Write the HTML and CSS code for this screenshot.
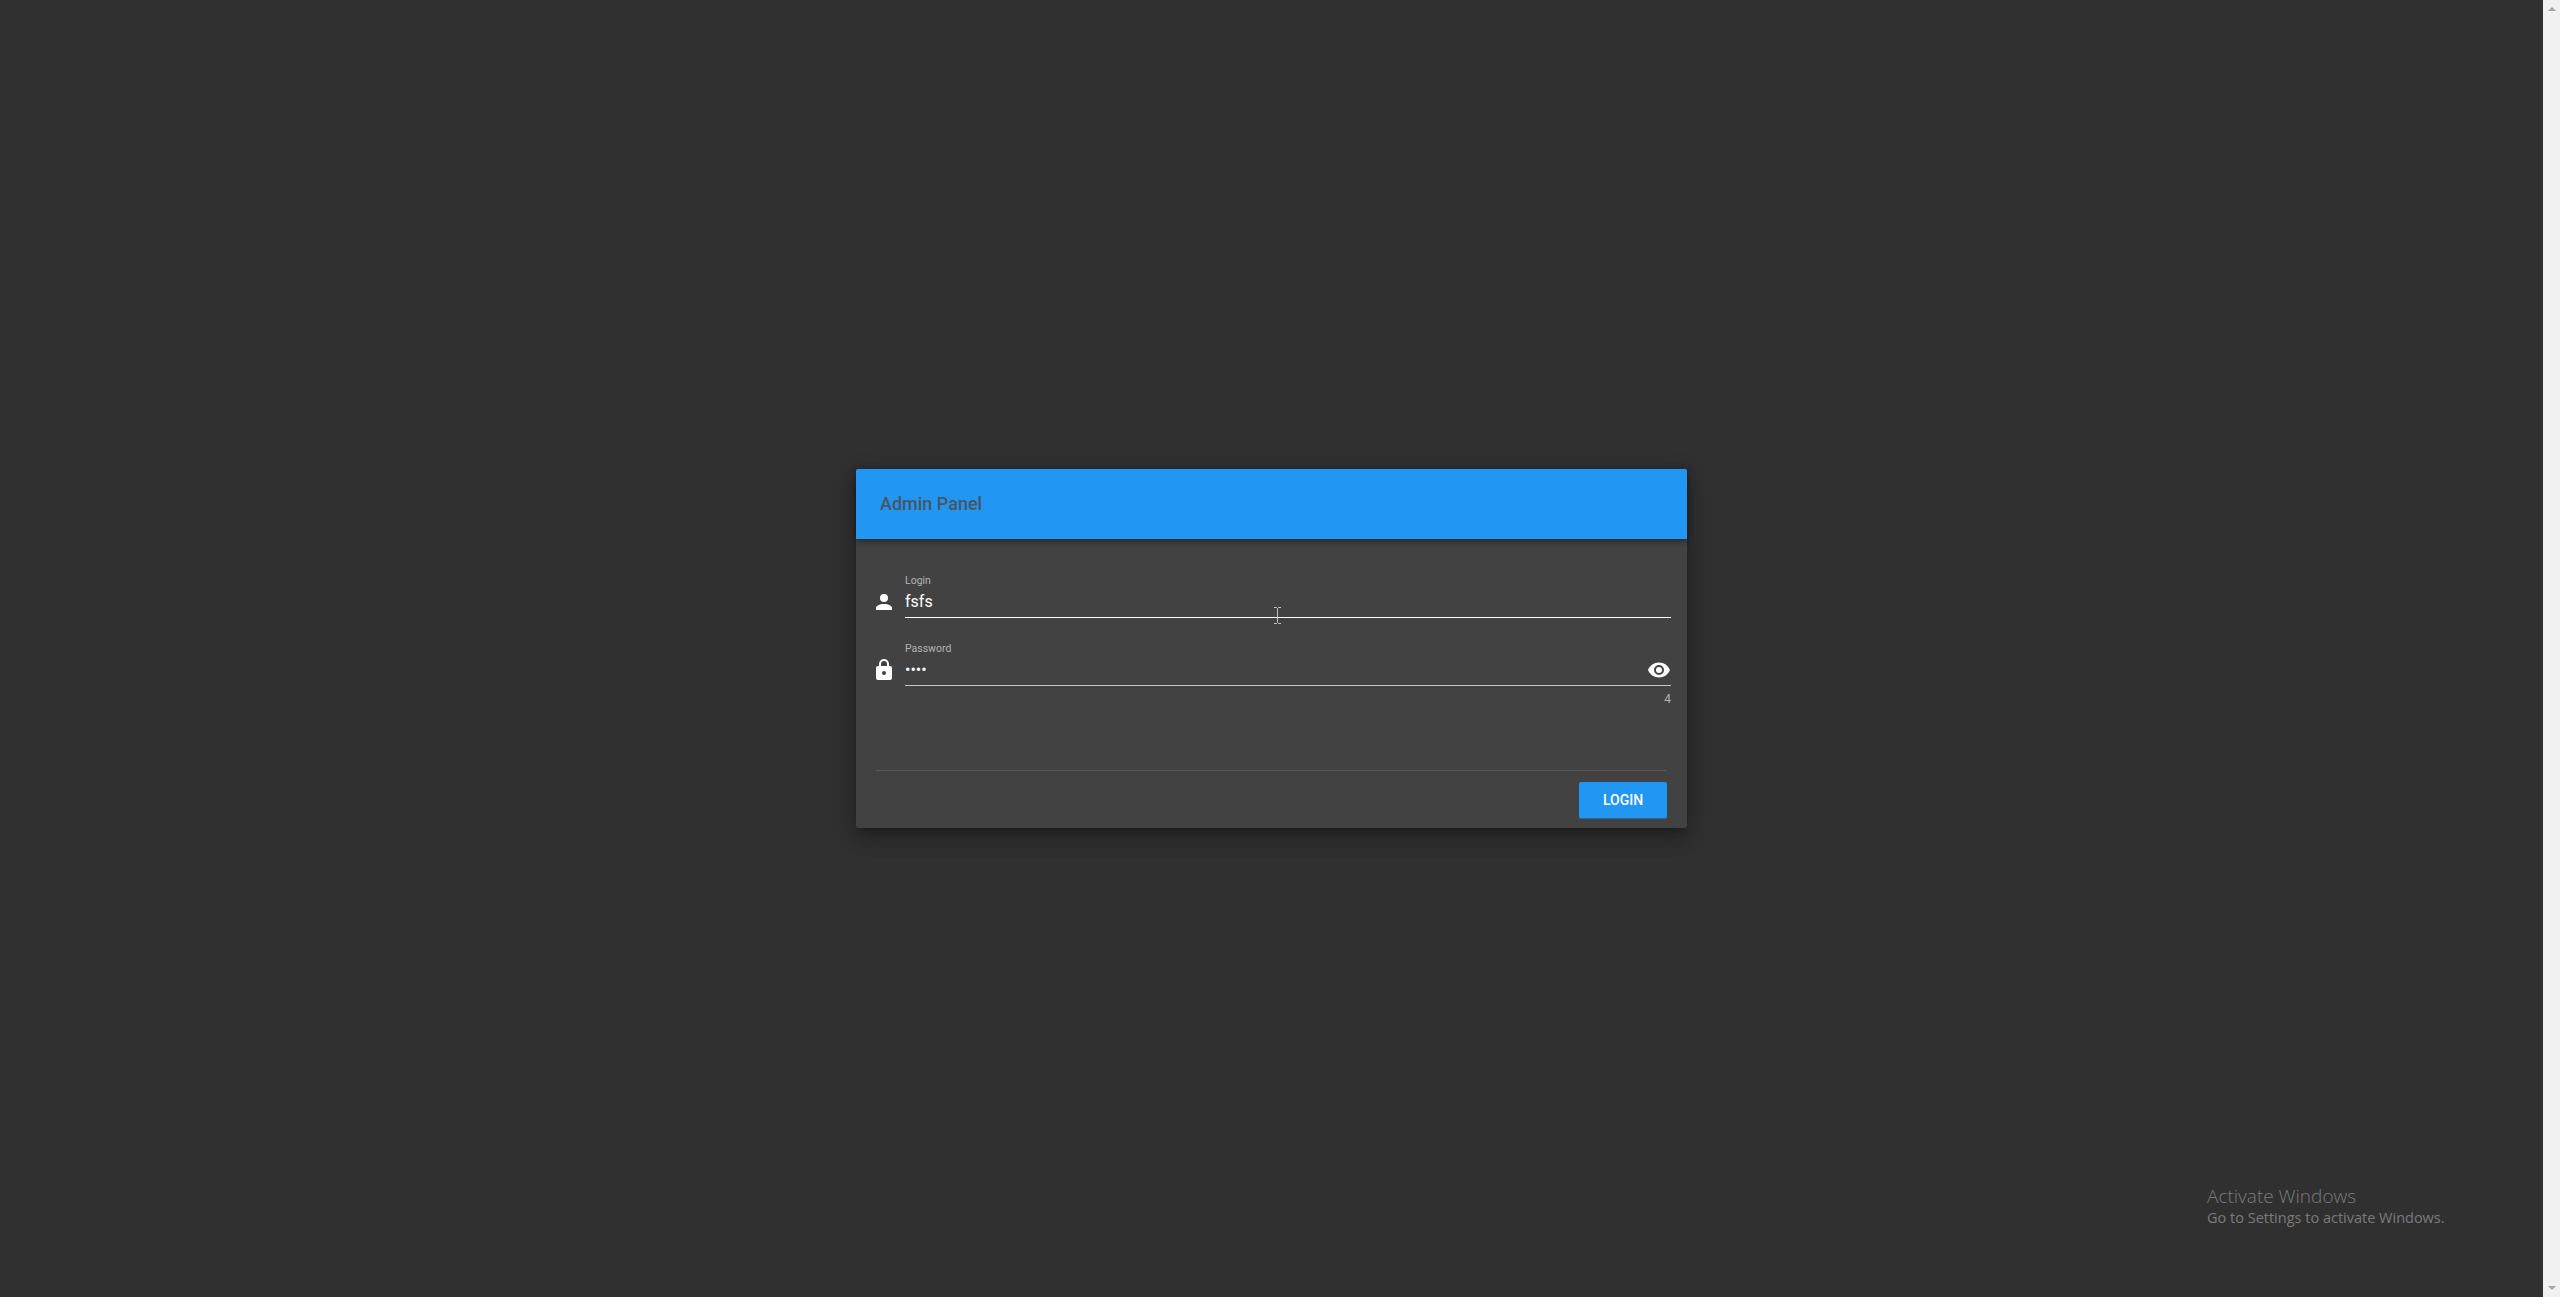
FILE: index.html
```html
<!DOCTYPE html>
<html lang="en">
<head>
  <meta charset="UTF-8">
  <title>Admin Panel</title>
  <link rel="stylesheet" href="styles.css">
</head>
<body>
  <main id="page">
    <form id="login-card">
      <header id="card-header">Admin Panel</header>
      <div id="card-body">
        <div class="field field-hover">
          <svg class="icon" viewBox="0 0 24 24"><path d="M12 4a4 4 0 0 1 4 4 4 4 0 0 1-4 4 4 4 0 0 1-4-4 4 4 0 0 1 4-4m0 10c4.42 0 8 1.79 8 4v2H4v-2c0-2.21 3.58-4 8-4z"/></svg>
          <div class="field-main">
            <label for="login">Login</label>
            <div class="field-input">
              <input type="text" id="login" value="fsfs">
            </div>
          </div>
        </div>
        <div class="field">
          <svg class="icon" viewBox="0 0 24 24"><path d="M12,17A2,2 0 0,0 14,15C14,13.89 13.1,13 12,13A2,2 0 0,0 10,15A2,2 0 0,0 12,17M18,8A2,2 0 0,1 20,10V20A2,2 0 0,1 18,22H6A2,2 0 0,1 4,20V10C4,8.89 4.9,8 6,8H7V6A5,5 0 0,1 12,1A5,5 0 0,1 17,6V8H18M12,3A3,3 0 0,0 9,6V8H15V6A3,3 0 0,0 12,3Z"/></svg>
          <div class="field-main">
            <label for="password">Password</label>
            <div class="field-input">
              <input type="password" id="password" value="fsfs">
              <svg class="icon eye" viewBox="0 0 24 24"><path d="M12,9A3,3 0 0,0 9,12A3,3 0 0,0 12,15A3,3 0 0,0 15,12A3,3 0 0,0 12,9M12,17A5,5 0 0,1 7,12A5,5 0 0,1 12,7A5,5 0 0,1 17,12A5,5 0 0,1 12,17M12,4.5C7,4.5 2.73,7.61 1,12C2.73,16.39 7,19.5 12,19.5C17,19.5 21.27,16.39 23,12C21.27,7.61 17,4.5 12,4.5Z"/></svg>
            </div>
            <div class="counter">4</div>
          </div>
        </div>
      </div>
      <footer id="card-footer">
        <button type="button">Login</button>
      </footer>
    </form>
  </main>

  <div id="scrollbar">
    <span class="arrow-up"></span>
    <span class="arrow-down"></span>
  </div>

  <!-- mouse cursor over the login field -->
  <svg id="cursor" viewBox="0 0 9 17" width="9" height="17"><path d="M1 .5h2.5l1 1 1-1H8M4.5 1.5v14M1 16.500h2.500l1-1 1 1H8" fill="none" stroke="#c4c4c4"/></svg>

  <div id="activate">
    <div class="activate-title">Activate Windows</div>
    <div class="activate-sub">Go to Settings to activate Windows.</div>
  </div>
</body>
</html>
```

FILE: styles.css
```css
html, body {
  height: 100%;
}
body {
  margin: 0;
  display: flex;
  overflow: hidden;
  background-color: #303030;
  color: #fff;
  font-family: Roboto, "Liberation Sans", sans-serif;
}
#page {
  flex: 1;
  display: flex;
  align-items: center;
  justify-content: center;
}
#login-card {
  width: 831px;
  background: #424242;
  border-radius: 2px;
  box-shadow: 0 7px 8px -4px rgba(0, 0, 0, 0.2), 0 12px 17px 2px rgba(0, 0, 0, 0.14), 0 5px 22px 4px rgba(0, 0, 0, 0.12);
}
#card-header {
  position: relative;
  height: 70px;
  padding-left: 24px;
  line-height: 70px;
  font-size: 18px;
  font-weight: 500;
  color: #4a5560;
  background: #2196f3;
  border-radius: 2px 2px 0 0;
  box-shadow: 0 2px 4px -1px rgba(0, 0, 0, 0.2), 0 4px 5px 0 rgba(0, 0, 0, 0.14), 0 1px 10px 0 rgba(0, 0, 0, 0.12);
}
#card-body {
  display: flex;
  flex-direction: column;
  gap: 24px;
  height: 231px;
  box-sizing: border-box;
  padding: 35px 16px 0;
}
.field {
  display: flex;
  gap: 9px;
}
.icon {
  flex: none;
  width: 24px;
  height: 24px;
  fill: #fff;
}
.field > .icon {
  margin-top: 16px;
}
.eye {
  margin-bottom: 1px;
}
.field-main {
  flex: 1;
}
label {
  display: block;
  height: 14px;
  font-size: 10.500px;
  line-height: 14px;
  color: rgba(255, 255, 255, 0.6);
}
.field-input {
  display: flex;
  align-items: center;
  height: 29px;
  border-bottom: 1px solid rgba(255, 255, 255, 0.7);
}
.field-hover .field-input {
  border-bottom-color: #fff;
}
.field-input input {
  flex: 1;
  min-width: 0;
  height: 24px;
  margin-bottom: 2px;
  padding: 0;
  border: none;
  outline: none;
  background: none;
  color: #fff;
  font-family: inherit;
  font-size: 16px;
}
.counter {
  margin-top: 6px;
  font-size: 12px;
  line-height: 14px;
  text-align: right;
  color: rgba(255, 255, 255, 0.6);
}
#card-footer {
  display: flex;
  justify-content: flex-end;
  margin: 0 20px;
  padding: 11px 0 10px;
  border-top: 1px solid rgba(255, 255, 255, 0.12);
}
#card-footer button {
  width: 88px;
  height: 36px;
  padding: 0;
  border: none;
  border-radius: 2px;
  background-color: #2196f3;
  color: #fff;
  font-family: inherit;
  font-size: 14px;
  font-weight: 500;
  text-transform: uppercase;
  box-shadow: 0 1px 1px rgba(33, 150, 243, 0.5);
}
#scrollbar {
  flex: none;
  width: 17px;
  display: flex;
  flex-direction: column;
  justify-content: space-between;
  align-items: center;
  padding: 7px 0;
  box-sizing: border-box;
  background: #f1f1f1;
}
.arrow-up, .arrow-down {
  width: 0;
  height: 0;
  border-left: 4px solid transparent;
  border-right: 4px solid transparent;
}
.arrow-up {
  border-bottom: 4px solid #a3a3a3;
}
.arrow-down {
  border-top: 4px solid #a3a3a3;
}
#cursor {
  position: absolute;
  left: 1273px;
  top: 607px;
}
#activate {
  position: absolute;
  left: 2207px;
  top: 1183px;
  color: #7b7b7b;
  font-family: "Open Sans", sans-serif;
}
.activate-title {
  font-size: 19px;
  font-weight: 300;
  line-height: 26px;
}
.activate-sub {
  font-size: 14.500px;
  line-height: 18px;
}
```
